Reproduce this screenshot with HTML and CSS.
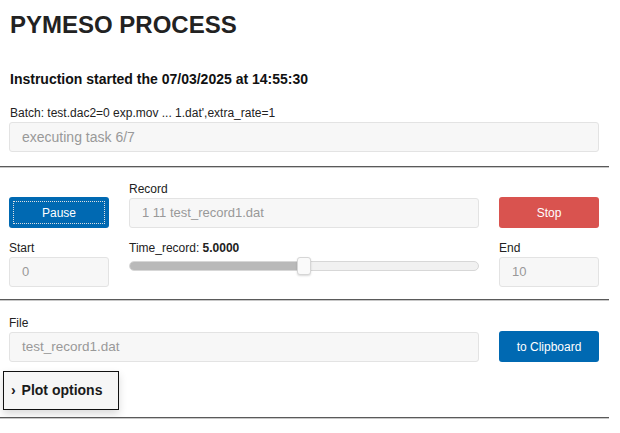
FILE: index.html
```html
<!DOCTYPE html>
<html>
<head>
<meta charset="utf-8">
<link rel="stylesheet" href="styles.css">
</head>
<body>
<div class="page">
  <div class="pad">
    <h1 class="title">PYMESO PROCESS</h1>
    <h4 class="started">Instruction started the 07/03/2025 at 14:55:30</h4>
    <label class="lbl batch-lbl">Batch: test.dac2=0 exp.mov ... 1.dat',extra_rate=1</label>
    <div class="field wide">executing task 6/7</div>
  </div>
  <hr class="sep first">
  <div class="pad grid">
    <div class="cell btn-cell"><button class="btn btn-primary focus">Pause</button></div>
    <div class="cell">
      <label class="lbl">Record</label>
      <div class="field">1 11 test_record1.dat</div>
    </div>
    <div class="cell btn-cell"><button class="btn btn-danger">Stop</button></div>

    <div class="cell">
      <label class="lbl">Start</label>
      <div class="field">0</div>
    </div>
    <div class="cell">
      <label class="lbl">Time_record: <b>5.0000</b></label>
      <div class="slider">
        <div class="track"><div class="fill" style="width:50%"></div></div>
        <div class="thumb" style="left:50%"></div>
      </div>
    </div>
    <div class="cell">
      <label class="lbl">End</label>
      <div class="field">10</div>
    </div>
  </div>
  <hr class="sep second">
  <div class="pad grid2">
    <div class="cell">
      <label class="lbl">File</label>
      <div class="field file">test_record1.dat</div>
    </div>
    <div class="cell btn-cell"><button class="btn btn-primary">to Clipboard</button></div>
  </div>
  <div class="details-wrap">
    <div class="summary"><span class="chev">&#8250;</span> Plot options</div>
  </div>
  <hr class="sep third">
</div>
</body>
</html>
```
FILE: styles.css
```css
* { box-sizing: border-box; }
body {
  margin: 0;
  font-family: "Liberation Sans", Arial, sans-serif;
  font-size: 12px;
  color: #222;
  background: #fff;
}
.page { width: 609px; }
.pad { padding: 0 10px 0 9px; }
.title {
  margin: 0;
  padding: 11px 0 0 1px;
  font-size: 24px;
  line-height: 28px;
  font-weight: bold;
  color: #222;
}
.started {
  margin: 31px 0 0 1px;
  font-size: 14px;
  line-height: 18px;
  font-weight: bold;
  color: #111;
}
.lbl {
  display: block;
  font-size: 12px;
  line-height: 14px;
  margin-bottom: 2px;
  color: #222;
}
.batch-lbl { margin-top: 18px; margin-left: 1px; }
.field {
  height: 30px;
  border: 1px solid #e3e3e3;
  border-radius: 3px;
  background: #f7f7f7;
  color: #999;
  font-size: 13px;
  line-height: 28px;
  padding: 0 12px;
}
.field.wide { font-size: 14px; }
.field.file { font-size: 13.5px; }
.sep {
  margin: 0;
  border: 0;
  height: 2px;
  background: #5a5a5a;
  border-bottom: 1px solid #c8c8c8;
}
.first { margin-top: 14px; }
.grid {
  display: grid;
  grid-template-columns: 100px 350px 100px;
  column-gap: 20px;
  row-gap: 13px;
  padding-top: 14px;
}
.btn-cell { display: flex; align-items: flex-end; }
.btn {
  width: 100%;
  height: 31px;
  border: 0;
  border-radius: 3px;
  color: #fff;
  font-family: "Liberation Sans", Arial, sans-serif;
  font-size: 12px;
}
.btn-primary { background: #0069b2; }
.btn-danger { background: #d9534f; }
.focus { outline: 1px dotted #e0e0e0; outline-offset: -5px; }
.slider { position: relative; height: 30px; }
.track {
  position: absolute;
  left: 0; right: 0; top: 4px;
  height: 10px;
  border: 1px solid #d7d7d7;
  border-radius: 5px;
  background: #f1f1f1;
  overflow: hidden;
}
.fill { height: 100%; background: #b9b9b9; }
.thumb {
  position: absolute;
  top: 0;
  width: 14px;
  height: 18px;
  margin-left: -7px;
  border: 1px solid #d6d6d6;
  border-radius: 3px;
  background: #fafafa;
  box-shadow: 0 1px 2px rgba(0,0,0,0.15);
}
.second { margin-top: 12px; }
.grid2 {
  display: grid;
  grid-template-columns: 470px 100px;
  column-gap: 20px;
  padding-top: 15px;
}
.details-wrap { padding: 9px 0 7px 3px; }
.summary {
  width: 116px;
  height: 39px;
  border: 1px solid #111;
  background: #f6f6f6;
  box-shadow: 0 4px 8px rgba(0,0,0,0.15);
  font-size: 14px;
  font-weight: bold;
  line-height: 37px;
  padding-left: 7px;
  color: #1a1a1a;
}
.chev { font-size: 14px; margin-right: 2px; }
```
